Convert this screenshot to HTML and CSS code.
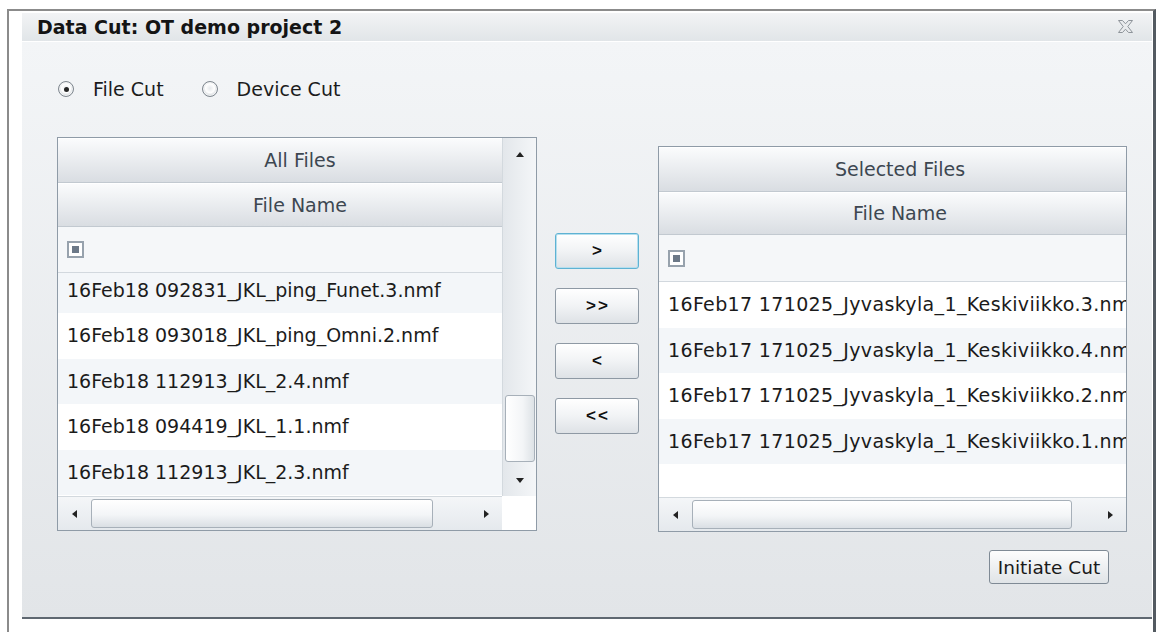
FILE: index.html
```html
<!DOCTYPE html>
<html lang="en">
<head>
<meta charset="utf-8">
<title>Data Cut</title>
<link rel="stylesheet" href="styles.css">
</head>
<body>
<div class="frame">
  <section class="dialog">
    <header class="titlebar">
      <h1 class="title">Data Cut: OT demo project 2</h1>
      <span class="close" aria-label="Close">
        <svg width="15" height="13" viewBox="0 0 15 13">
          <polygon points="0.5,0.5 4.5,0.5 7.5,3.8 10.5,0.5 14.5,0.5 9.8,6.5 14.5,12.5 10.5,12.5 7.5,9.2 4.5,12.5 0.5,12.5 5.2,6.5" fill="#e9ebed" stroke="#8e949a" stroke-width="1"/>
        </svg>
      </span>
    </header>

    <div class="dialog-body">
      <div class="mode">
        <label class="radio"><span class="radio-dot is-checked"></span><span>File Cut</span></label>
        <label class="radio"><span class="radio-dot"></span><span>Device Cut</span></label>
      </div>

      <div class="transfer">
        <div class="grid grid-all">
          <div class="grid-main">
            <div class="grid-group">All Files</div>
            <div class="grid-col">File Name</div>
            <div class="grid-filter"><span class="check"></span></div>
            <div class="grid-rows">
              <div class="rows-inner">
                <div class="row alt">16Feb18 092831_JKL_ping_Funet.3.nmf</div>
                <div class="row">16Feb18 093018_JKL_ping_Omni.2.nmf</div>
                <div class="row alt">16Feb18 112913_JKL_2.4.nmf</div>
                <div class="row">16Feb18 094419_JKL_1.1.nmf</div>
                <div class="row alt">16Feb18 112913_JKL_2.3.nmf</div>
              </div>
            </div>
          </div>
          <div class="vscroll">
            <span class="sb-btn"><span class="tri tri-up"></span></span>
            <span class="vtrack"><span class="thumb" style="height:67px"></span></span>
            <span class="sb-btn"><span class="tri tri-down"></span></span>
          </div>
          <div class="hscroll">
            <span class="sb-btn"><span class="tri tri-left"></span></span>
            <span class="htrack"><span class="thumb" style="width:342px"></span></span>
            <span class="sb-btn"><span class="tri tri-right"></span></span>
          </div>
          <div class="corner"></div>
        </div>

        <div class="movers">
          <button class="mover is-focused">&gt;</button>
          <button class="mover">&gt;&gt;</button>
          <button class="mover">&lt;</button>
          <button class="mover">&lt;&lt;</button>
        </div>

        <div class="grid grid-selected">
          <div class="grid-main">
            <div class="grid-group">Selected Files</div>
            <div class="grid-col">File Name</div>
            <div class="grid-filter"><span class="check"></span></div>
            <div class="grid-rows">
              <div class="rows-inner">
                <div class="row">16Feb17 171025_Jyvaskyla_1_Keskiviikko.3.nmf</div>
                <div class="row alt">16Feb17 171025_Jyvaskyla_1_Keskiviikko.4.nmf</div>
                <div class="row">16Feb17 171025_Jyvaskyla_1_Keskiviikko.2.nmf</div>
                <div class="row alt">16Feb17 171025_Jyvaskyla_1_Keskiviikko.1.nmf</div>
              </div>
            </div>
          </div>
          <div class="hscroll">
            <span class="sb-btn"><span class="tri tri-left"></span></span>
            <span class="htrack"><span class="thumb" style="width:380px"></span></span>
            <span class="sb-btn"><span class="tri tri-right"></span></span>
          </div>
        </div>
      </div>

      <div class="actions">
        <button class="action">Initiate Cut</button>
      </div>
    </div>
  </section>
</div>
</body>
</html>
```

FILE: styles.css
```css
* { box-sizing: border-box; }

html, body {
  margin: 0;
  height: 100%;
}

body {
  background: #fff;
  overflow: hidden;
  font-family: "DejaVu Sans", Verdana, sans-serif;
  color: #1c1c1c;
}

/* host window edge around the dialog */
.frame {
  margin: 9px 0 0 7px;
  width: 1149px;
  height: 640px;
  border-left: 2px solid #8b8b8b;
  border-top: 2px solid #8b8b8b;
  border-right: 3px solid #535a61;
  padding: 2px 1px 0 13px;
}

.dialog {
  width: 1130px;
  height: 606px;
  display: flex;
  flex-direction: column;
  border-bottom: 2px solid #5f6871;
}

/* title bar */
.titlebar {
  flex: none;
  height: 29px;
  display: flex;
  align-items: center;
  justify-content: space-between;
  padding: 0 19px 0 15px;
  background: linear-gradient(#f2f3f5, #e1e5e8);
  border-bottom: 1px solid #fff;
}

.title {
  margin: 0;
  font-size: 19px;
  font-weight: bold;
  color: #141414;
  line-height: 1;
}

.close {
  display: flex;
  margin-top: -2px;
}

/* body */
.dialog-body {
  flex: 1;
  background: linear-gradient(#f3f5f7, #e2e5e8);
  padding: 36px 25px 0 35px;
}

.mode {
  display: flex;
  align-items: center;
  height: 22px;
  font-size: 19px;
  line-height: 22px;
}

.radio {
  display: flex;
  align-items: center;
  gap: 19px;
  margin-left: 1px;
}

.radio + .radio {
  margin-left: 38px;
}

.radio-dot {
  flex: none;
  width: 16px;
  height: 16px;
  border-radius: 50%;
  border: 1px solid #7f878f;
  background: radial-gradient(circle at 50% 45%, #e6e9ec 0, #f7f8f9 3px, #ffffff 4.5px, #d3d8dc 7px);
  box-shadow: inset 0 0 0 1px #f4f5f6;
  display: grid;
  place-items: center;
}

.radio-dot.is-checked::after {
  content: "";
  width: 5px;
  height: 5px;
  border-radius: 50%;
  background: #262626;
}

.transfer {
  display: flex;
  align-items: flex-start;
  margin-top: 37px;
}

/* data grids */
.grid {
  display: grid;
  background: #fff;
  border: 1px solid #8f9ba7;
}

.grid-all {
  width: 480px;
  height: 394px;
  grid-template-columns: 1fr 34px;
  grid-template-rows: 1fr 34px;
}

.grid-selected {
  width: 469px;
  height: 386px;
  margin-top: 9px;
  grid-template-columns: 1fr;
  grid-template-rows: 1fr 34px;
}

.grid-main {
  display: flex;
  flex-direction: column;
  overflow: hidden;
  min-width: 0;
  min-height: 0;
}

.grid-group,
.grid-col {
  flex: none;
  display: flex;
  align-items: center;
  justify-content: center;
  font-size: 19px;
  color: #3d4751;
  background: linear-gradient(#fbfcfd, #d9dde2);
  border-bottom: 1px solid #c2c9d0;
  box-shadow: inset 0 1px 0 #fff;
}

.grid-all .grid-group { height: 45px; padding-left: 40px; }
.grid-all .grid-col { height: 44px; padding-left: 40px; }
.grid-selected .grid-group { height: 45px; padding-left: 15px; }
.grid-selected .grid-col { height: 43px; padding-left: 15px; }

.grid-filter {
  flex: none;
  display: flex;
  align-items: center;
  padding-left: 9px;
  background: #f5f7f9;
  border-bottom: 1px solid #d2d8de;
}

.grid-all .grid-filter { height: 46px; }
.grid-selected .grid-filter { height: 47px; }

.check {
  width: 17px;
  height: 17px;
  border: 2px solid #97a2ad;
  background: #fff;
  padding: 3px;
  display: flex;
}

.check::after {
  content: "";
  flex: 1;
  background: #6c7988;
}

.grid-rows {
  flex: 1;
  min-height: 0;
  overflow: hidden;
}

.grid-all .rows-inner {
  margin-top: -5.5px;
}

.row {
  height: 45.5px;
  line-height: 45.5px;
  padding-left: 9px;
  white-space: nowrap;
  font-size: 19px;
  color: #1b1b1b;
}

.grid-selected .row {
  letter-spacing: 0.35px;
}

.row.alt {
  background: #f3f6f9;
}

/* scrollbars */
.vscroll {
  grid-column: 2;
  grid-row: 1;
  display: flex;
  flex-direction: column;
  background: linear-gradient(to right, #e3e7eb, #f4f6f8);
  border-left: 1px solid #d3d9de;
}

.hscroll {
  grid-column: 1;
  grid-row: 2;
  display: flex;
  background: linear-gradient(#f4f6f8, #e5e9ed);
  border-top: 1px solid #d3d9de;
}

.corner {
  grid-column: 2;
  grid-row: 2;
  background: #fff;
}

.sb-btn {
  flex: none;
  display: flex;
  align-items: center;
  justify-content: center;
}

.vscroll .sb-btn { height: 32px; }
.hscroll .sb-btn { width: 32px; }

.vtrack {
  flex: 1;
  display: flex;
  flex-direction: column;
  justify-content: flex-end;
  align-items: center;
  padding-bottom: 2px;
}

.htrack {
  flex: 1;
  display: flex;
  align-items: center;
  padding-left: 1px;
}

.thumb {
  display: block;
  border: 1px solid #a7b0b9;
  border-radius: 3px;
}

.vtrack .thumb {
  width: 30px;
  background: linear-gradient(to right, #ffffff, #f3f5f7 60%, #dde2e6);
}

.htrack .thumb {
  height: 29px;
  background: linear-gradient(#ffffff, #f3f5f7 55%, #dadfe4);
}

.tri {
  width: 0;
  height: 0;
  border: 0 solid transparent;
}

.tri-up { border-width: 0 4px 5px; border-bottom-color: #222; }
.tri-down { border-width: 5px 4px 0; border-top-color: #222; }
.tri-left { border-width: 4px 5px 4px 0; border-right-color: #222; }
.tri-right { border-width: 4px 0 4px 5px; border-left-color: #222; }

/* move buttons */
.movers {
  display: flex;
  flex-direction: column;
  gap: 19px;
  margin: 96px 19px 0 18px;
}

.mover {
  width: 84px;
  height: 36px;
  padding: 0;
  border: 1px solid #8e99a4;
  border-radius: 3px;
  background: linear-gradient(#ffffff, #f1f3f5 50%, #dee2e6);
  font-family: "Liberation Sans", Arial, sans-serif;
  font-weight: bold;
  font-size: 17px;
  letter-spacing: 2px;
  text-indent: 2px;
  color: #111;
}

.mover.is-focused {
  border-color: #5eb2d3;
  box-shadow: inset 0 0 0 1px #b6dfee;
}

.actions {
  display: flex;
  justify-content: flex-end;
  margin-top: 18px;
  padding-right: 18px;
}

.action {
  width: 120px;
  height: 34px;
  padding: 0;
  border: 1px solid #7f8a95;
  border-radius: 3px;
  background: linear-gradient(#fdfdfd, #eef0f2 50%, #e0e4e7);
  font-family: "DejaVu Sans", Verdana, sans-serif;
  font-size: 18.5px;
  color: #1a1a1a;
}
```
